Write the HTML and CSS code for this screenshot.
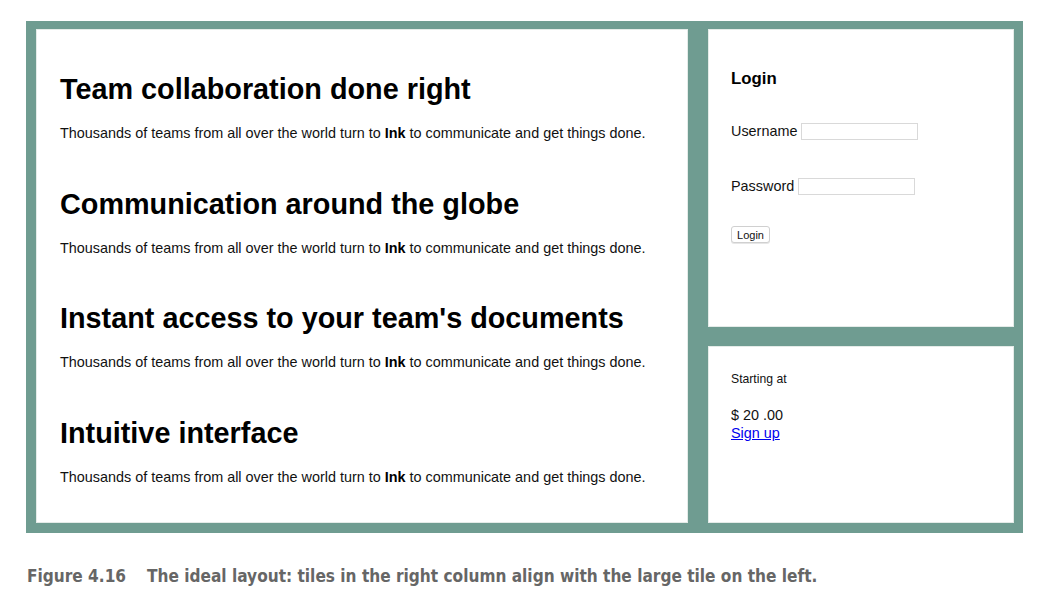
FILE: index.html
```html
<!DOCTYPE html>
<html>
<head>
<meta charset="utf-8">
<link rel="stylesheet" href="styles.css">
</head>
<body>
<div class="figure">
  <div class="grid">
    <main class="tile tile-main">
      <section class="feature">
        <h2>Team collaboration done right</h2>
        <p>Thousands of teams from all over the world turn to <b>Ink</b> to communicate and get things done.</p>
      </section>
      <section class="feature">
        <h2>Communication around the globe</h2>
        <p>Thousands of teams from all over the world turn to <b>Ink</b> to communicate and get things done.</p>
      </section>
      <section class="feature">
        <h2>Instant access to your team's documents</h2>
        <p>Thousands of teams from all over the world turn to <b>Ink</b> to communicate and get things done.</p>
      </section>
      <section class="feature">
        <h2>Intuitive interface</h2>
        <p>Thousands of teams from all over the world turn to <b>Ink</b> to communicate and get things done.</p>
      </section>
    </main>
    <div class="side">
      <form class="tile tile-login">
        <h3>Login</h3>
        <div class="field"><label>Username</label><input class="user" type="text"></div>
        <div class="field"><label>Password</label><input class="pass" type="password"></div>
        <button type="button" class="btn">Login</button>
      </form>
      <div class="tile tile-price">
        <p class="starting">Starting at</p>
        <p class="price">$ 20 .00</p>
        <a href="#" class="signup">Sign up</a>
      </div>
    </div>
  </div>
  <p class="caption"><span class="fig-num">Figure 4.16</span>The ideal layout: tiles in the right column align with the large tile on the left.</p>
</div>
</body>
</html>
```

FILE: styles.css
```css
* { box-sizing: border-box; }
html, body { margin: 0; padding: 0; background: #fff; }
body { font-family: "Liberation Sans", Arial, sans-serif; color: #111; }

.figure { padding: 21px 0 0 26px; }

.grid {
  width: 997px;
  height: 512px;
  background: #6f9c91;
  padding: 9px 10px 11px 11px;
  display: flex;
  gap: 22px;
}

.tile {
  background: #fff;
  box-shadow: 0 0 0 1px #e4ebe8;
}

.tile-main {
  width: 650px;
  padding: 42px 0 0 23px;
}
.feature h2 {
  margin: 0 0 18px;
  font-size: 28.8px;
  line-height: 34px;
  font-weight: bold;
  color: #000;
}
.feature p {
  margin: 0 0 44.6px;
  font-size: 14.4px;
  line-height: 18px;
  color: #111;
}
.feature b { color: #000; }

.side {
  width: 304px;
  display: flex;
  flex-direction: column;
  gap: 21px;
}
.tile-login {
  height: 296px;
  padding: 38px 0 0 22px;
  margin: 0;
}
.tile-login h3 {
  margin: 0 0 33px;
  font-size: 16.8px;
  line-height: 21px;
  color: #000;
}
.field {
  display: flex;
  align-items: center;
  gap: 4px;
  height: 18px;
  margin-bottom: 37px;
  font-size: 14.4px;
}
.field input {
  width: 117px;
  height: 17px;
  border: 1px solid #d9d9d9;
  padding: 0;
  margin: 0;
  background: #fff;
}
.btn {
  display: block;
  margin-top: -6px;
  font-family: "Liberation Sans", Arial, sans-serif;
  font-size: 11px;
  height: 17px;
  width: 39px;
  padding: 0;
  background: #fff;
  border: 1px solid #d0d0d0;
  border-radius: 3px;
  box-shadow: 0 1px 0 #e6e6e6;
  color: #111;
}

.tile-price {
  flex: 1;
  padding: 24px 0 0 22px;
}
.starting {
  margin: 0 0 20px;
  font-size: 12.2px;
  line-height: 16px;
}
.price {
  margin: 0;
  font-size: 14.4px;
  line-height: 17px;
}
.signup {
  font-size: 14.4px;
  line-height: 17px;
  color: #0000ee;
  text-decoration: underline;
}

.caption {
  margin: 33px 0 0 1px;
  font-family: "DejaVu Sans", sans-serif;
  font-stretch: condensed;
  font-weight: bold;
  font-size: 17.1px;
  color: #666;
}
.fig-num { margin-right: 21px; }
```
